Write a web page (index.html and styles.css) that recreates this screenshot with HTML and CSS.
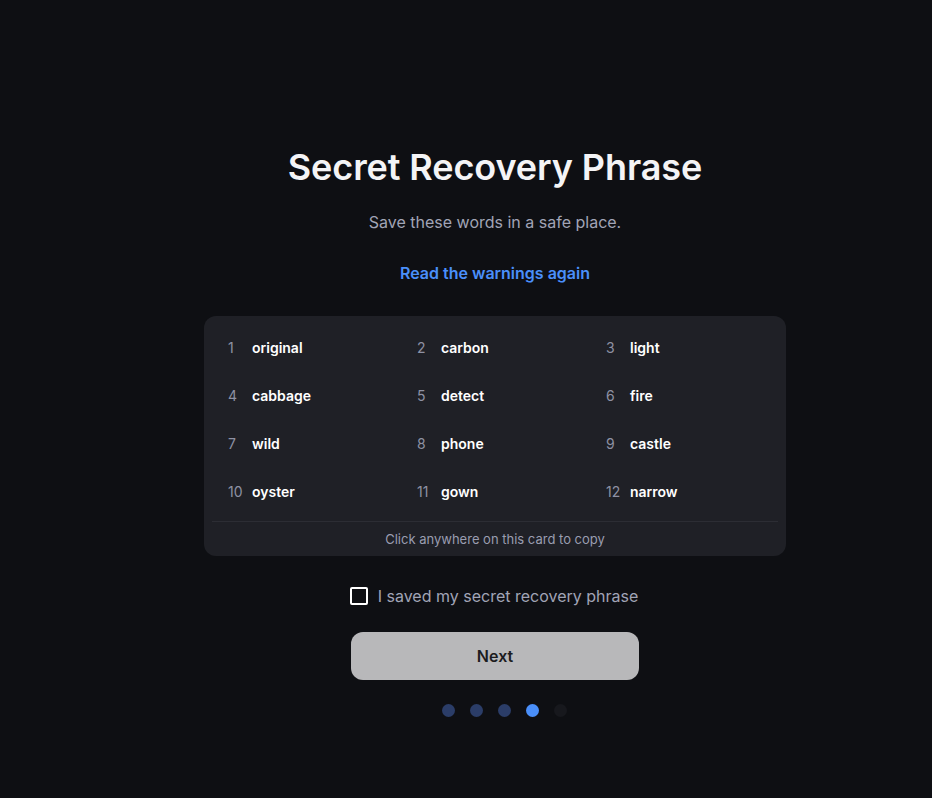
FILE: index.html
```html
<!DOCTYPE html>
<html lang="en">
<head>
<meta charset="utf-8">
<title>Secret Recovery Phrase</title>
<link rel="stylesheet" href="styles.css">
</head>
<body>
<main class="page">
  <h1 class="title">Secret Recovery Phrase</h1>
  <p class="subtitle">Save these words in a safe place.</p>
  <a class="link" href="#">Read the warnings again</a>
  <section class="card">
    <ol class="words">
      <li class="word"><span class="num">1</span><span class="txt">original</span></li>
      <li class="word"><span class="num">2</span><span class="txt">carbon</span></li>
      <li class="word"><span class="num">3</span><span class="txt">light</span></li>
      <li class="word"><span class="num">4</span><span class="txt">cabbage</span></li>
      <li class="word"><span class="num">5</span><span class="txt">detect</span></li>
      <li class="word"><span class="num">6</span><span class="txt">fire</span></li>
      <li class="word"><span class="num">7</span><span class="txt">wild</span></li>
      <li class="word"><span class="num">8</span><span class="txt">phone</span></li>
      <li class="word"><span class="num">9</span><span class="txt">castle</span></li>
      <li class="word"><span class="num">10</span><span class="txt">oyster</span></li>
      <li class="word"><span class="num">11</span><span class="txt">gown</span></li>
      <li class="word"><span class="num">12</span><span class="txt">narrow</span></li>
    </ol>
    <div class="divider"></div>
    <div class="copy">Click anywhere on this card to copy</div>
  </section>
  <label class="check">
    <span class="box"></span>
    <span class="check-label">I saved my secret recovery phrase</span>
  </label>
  <button class="next" type="button">Next</button>
  <div class="dots">
    <span class="dot done"></span>
    <span class="dot done"></span>
    <span class="dot done"></span>
    <span class="dot active"></span>
    <span class="dot todo"></span>
  </div>
</main>
</body>
</html>
```
FILE: styles.css
```css
* { box-sizing: border-box; }
html, body {
  margin: 0;
  padding: 0;
  background: #0e0f13;
  height: 100%;
}
body {
  font-family: Inter, "Noto Sans", "Liberation Sans", sans-serif;
  color: #ffffff;
}
.page {
  display: flex;
  flex-direction: column;
  align-items: center;
  padding-top: 145px;
  padding-left: 58px;
}
.title {
  margin: 0;
  font-size: 36px;
  line-height: 44px;
  font-weight: 600;
  color: #f4f4f6;
  letter-spacing: -0.1px;
}
.subtitle {
  margin: 21px 0 0;
  font-size: 16px;
  line-height: 24px;
  color: #a1a4b6;
}
.link {
  margin-top: 27px;
  font-size: 16px;
  line-height: 24px;
  font-weight: 600;
  color: #4a8ffa;
  text-decoration: none;
}
.card {
  margin-top: 31px;
  width: 582px;
  background: #1f2026;
  border-radius: 12px;
  padding: 8px 8px 0;
}
.words {
  list-style: none;
  margin: 0;
  padding: 0 0 0 16px;
  display: grid;
  grid-template-columns: 189px 189px 180px;
  grid-auto-rows: 48px;
}
.word {
  display: flex;
  align-items: center;
  font-size: 14px;
  line-height: 20px;
}
.num {
  width: 24px;
  color: #8e91a3;
  font-weight: 400;
}
.txt {
  font-weight: 600;
  color: #ffffff;
}
.divider {
  margin-top: 5px;
  height: 1px;
  background: #2c2d34;
}
.copy {
  height: 34px;
  display: flex;
  align-items: center;
  justify-content: center;
  font-size: 13px;
  color: #9a9db0;
}
.check {
  margin-top: 28px;
  display: flex;
  align-items: center;
  gap: 10px;
  height: 24px;
  cursor: pointer;
}
.box {
  width: 18px;
  height: 18px;
  border: 2px solid #ffffff;
  border-radius: 2px;
  margin-left: -2px;
}
.check-label {
  font-size: 16px;
  line-height: 24px;
  color: #a1a4b6;
}
.next {
  margin-top: 24px;
  width: 288px;
  height: 48px;
  border: 0;
  border-radius: 12px;
  background: #b8b8ba;
  font-family: inherit;
  font-size: 16px;
  font-weight: 600;
  color: #1c1c20;
}
.dots {
  margin-top: 24px;
  display: flex;
  gap: 15px;
  padding-left: 18px;
}
.dot {
  width: 13px;
  height: 13px;
  border-radius: 50%;
}
.dot.done { background: #2b3d68; }
.dot.active { background: #4a8ffa; }
.dot.todo { background: #17181d; }
```
